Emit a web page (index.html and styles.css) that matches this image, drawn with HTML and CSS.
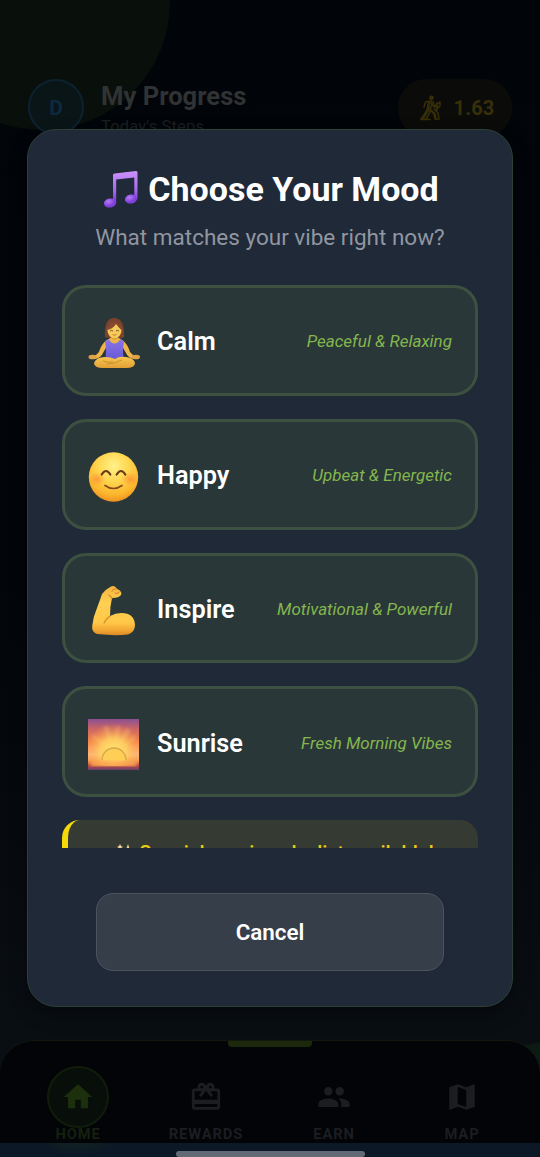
FILE: index.html
```html
<!DOCTYPE html>
<html lang="en">
<head>
<meta charset="utf-8">
<title>Choose Your Mood</title>
<link rel="stylesheet" href="styles.css">
</head>
<body>
<div class="screen">
  <div class="glow"></div>
  <div class="glow-low"></div>
  <header class="header">
    <div class="avatar">D</div>
    <div class="heading">
      <div class="heading-title">My Progress</div>
      <div class="heading-sub">Today's Steps</div>
    </div>
    <div class="balance">
      <svg class="walk" viewBox="0 0 24 26" fill="none" stroke="currentColor" stroke-width="1.500" stroke-linejoin="round" stroke-linecap="round"><circle cx="12.500" cy="2.800" r="1.600" fill="currentColor"/><path d="M5 12l1.500-5L11 6l3 1 2 4 5-4v4l-4 4M9.500 8L8 15l-3 5-3 4h5l3-5 1-3M13 9l-2 6 4 4 1 5h4l-1-6-4-4M18 8v7M2 24.500h9"/><path d="M10.500 7l-1 8-5 8M12 8l3 4h4M11 14l5 5 1 5"/></svg>
      <span>1.63</span>
    </div>
  </header>
  <div class="spacer"></div>
  <nav class="nav">
    <div class="nav-marker"></div>
    <div class="tab active"><div class="tab-icon"><svg viewBox="0 0 24 24"><path d="M10 20v-6h4v6h5v-8h3L12 3 2 12h3v8z"/></svg></div><span>HOME</span></div>
    <div class="tab"><div class="tab-icon"><svg viewBox="0 0 24 24"><path d="M20 6h-2.180c.11-.31.18-.65.18-1a3 3 0 0 0-5.500-1.650l-.5.670-.5-.680A3 3 0 0 0 6 5c0 .35.07.69.18 1H4c-1.110 0-1.990.89-1.990 2L2 19c0 1.110.89 2 2 2h16c1.110 0 2-.89 2-2V8c0-1.110-.89-2-2-2zm-5-2c.55 0 1 .45 1 1s-.45 1-1 1-1-.45-1-1 .45-1 1-1zM9 4c.55 0 1 .45 1 1s-.45 1-1 1-1-.45-1-1 .45-1 1-1zm11 15H4v-2h16v2zm0-5H4V8h5.080L7 10.830 8.620 12 11 8.760l1-1.360 1 1.360L15.380 12 17 10.830 14.920 8H20v6z"/></svg></div><span>REWARDS</span></div>
    <div class="tab"><div class="tab-icon"><svg viewBox="0 0 24 24"><path d="M16 11c1.660 0 2.990-1.340 2.990-3S17.660 5 16 5s-3 1.340-3 3 1.340 3 3 3zm-8 0c1.660 0 2.990-1.340 2.990-3S9.660 5 8 5 5 6.340 5 8s1.340 3 3 3zm0 2c-2.330 0-7 1.170-7 3.500V19h14v-2.500c0-2.330-4.670-3.500-7-3.500zm8 0c-.29 0-.62.02-.97.05 1.160.84 1.970 1.970 1.970 3.450V19h6v-2.500c0-2.330-4.670-3.500-7-3.500z"/></svg></div><span>EARN</span></div>
    <div class="tab"><div class="tab-icon"><svg viewBox="0 0 24 24"><path d="M20.500 3l-.16.03L15 5.100 9 3 3.360 4.900c-.21.07-.36.25-.36.48V20.500c0 .28.22.5.5.5l.16-.03L9 18.900l6 2.100 5.640-1.900c.21-.07.36-.25.36-.48V3.500c0-.28-.22-.5-.5-.5zM15 19l-6-2.110V5l6 2.110V19z"/></svg></div><span>MAP</span></div>
  </nav>
  <div class="system-bar"><div class="home-glow"></div><div class="handle"></div></div>

  <div class="modal">
    <h1 class="title">
      <svg class="note" viewBox="0 0 36 38"><defs><linearGradient id="nt" x1="0" y1="0" x2="0" y2="1"><stop offset="0" stop-color="#ce91fa"/><stop offset=".6" stop-color="#a269ee"/><stop offset="1" stop-color="#7a35d2"/></linearGradient><radialGradient id="nh" cx=".4" cy=".3"><stop offset="0" stop-color="#b47bf5"/><stop offset="1" stop-color="#8140dc"/></radialGradient></defs><path d="M10 5Q10 3.700 11.500 3.500L33 1Q34.500 .9 34.500 2.500V29H31.300V7.500L13.200 9.500V33H10z" fill="url(#nt)"/><ellipse cx="7" cy="33" rx="6.200" ry="4.500" transform="rotate(-12 7 33)" fill="url(#nh)"/><ellipse cx="28" cy="29" rx="6.200" ry="4.500" transform="rotate(-12 28 29)" fill="url(#nh)"/></svg>
      <span>Choose Your Mood</span>
    </h1>
    <p class="subtitle">What matches your vibe right now?</p>
    <div class="list">
      <div class="option">
        <svg class="emoji" viewBox="0 0 52 52"><defs><linearGradient id="sk" x1="0" y1="0" x2="0" y2="1"><stop offset="0" stop-color="#f8c750"/><stop offset="1" stop-color="#e2a035"/></linearGradient><linearGradient id="top" x1="0" y1="0" x2="0" y2="1"><stop offset="0" stop-color="#8a76e4"/><stop offset="1" stop-color="#6758d6"/></linearGradient></defs><path d="M17 20Q16 1 26 1Q37 1 36 20Q31 24 17 20z" fill="#7b432e"/><path d="M23.500 17h6v7h-6z" fill="#d99b36"/><path d="M18 23.500Q21 22 23 20.500Q26.500 25 30 20.500Q32 22 35 23.500Q40 28 42 35Q44 38 48 39L46 42Q40 41 38 36L34 29L35 42H18L19 29L15 36Q13 41 7 42L5 39Q9 38 11 35Q13 28 18 23.500z" fill="#efb548"/><ellipse cx="26.500" cy="13.500" rx="7" ry="7.800" fill="#f7cb57"/><path d="M19 13Q20 5 28 5q6 2 6.500 9Q31 11 28 7q-3 5-9 6z" fill="#87492f"/><path d="M22 14q1.500-1.300 3 0m3 0q1.500-1.300 3 0" stroke="#69422e" stroke-width=".9" fill="none"/><path d="M24.500 17.500q2 1.500 4 0" stroke="#c36d34" stroke-width=".9" fill="none"/><path d="M17 43Q19 35 17 24.500L20.500 22Q26.500 31 32.500 22L36 24.500Q34 35 36 43z" fill="url(#top)"/><path d="M6 46Q8 40 17 40Q23 40 27 42Q31 39 38 40Q46 41 47 46Q47 51 38 51H15Q6 51 6 46z" fill="url(#sk)"/><path d="M19 47Q26 47 34 43M15 44Q20 46 25 45" stroke="#cb9133" fill="none"/><ellipse cx="4.500" cy="40" rx="4" ry="2.300" fill="#dda346"/><ellipse cx="48" cy="40" rx="4" ry="2.300" fill="#dda346"/></svg>
        <span class="name">Calm</span><span class="desc">Peaceful &amp; Relaxing</span>
      </div>
      <div class="option">
        <svg class="emoji" viewBox="0 0 52 52"><defs><radialGradient id="face" cx=".5" cy=".28" r=".74"><stop offset="0" stop-color="#fff18b"/><stop offset=".4" stop-color="#ffd852"/><stop offset=".78" stop-color="#fbb62c"/><stop offset="1" stop-color="#ed8c22"/></radialGradient><radialGradient id="blush"><stop offset="0" stop-color="#ff702e" stop-opacity=".5"/><stop offset="1" stop-color="#ff702e" stop-opacity="0"/></radialGradient></defs><circle cx="25.500" cy="26" r="24.700" fill="url(#face)"/><ellipse cx="9" cy="28" rx="8.500" ry="7" fill="url(#blush)"/><ellipse cx="42" cy="28" rx="8.500" ry="7" fill="url(#blush)"/><path d="M13.700 23.500Q18 16.500 22.300 23.500M28.700 23.500Q33 16.500 37.300 23.500" fill="none" stroke="#6b3c1b" stroke-width="2.200" stroke-linecap="round"/><path d="M17 34.500Q25.500 40.500 34 34.500" fill="none" stroke="#8a491d" stroke-width="1.700" stroke-linecap="round"/></svg>
        <span class="name">Happy</span><span class="desc">Upbeat &amp; Energetic</span>
      </div>
      <div class="option">
        <svg class="emoji" viewBox="0 0 52 52"><defs><linearGradient id="arm" x1="0" y1="0" x2="0" y2="1"><stop offset="0" stop-color="#f5b63d"/><stop offset=".35" stop-color="#ffd052"/><stop offset=".75" stop-color="#ffc747"/><stop offset=".9" stop-color="#f2a632"/><stop offset="1" stop-color="#d98a27"/></linearGradient></defs><path d="M14 9Q18 4 23 1.500Q27 0 29 4Q33 5 33.500 9Q32 13 24 13Q22 21 22 31Q31 26 40 29Q47 32 47 40Q47 47 40 49.500Q27 51 9 49Q3.500 47 4.200 41Q5 32 9 23Q12 15 14 9z" fill="url(#arm)"/><path d="M22 31Q18 34 16 38M24 13L21 10M24 6q2-3 5-2M27 8q3 1 4-1" fill="none" stroke="#d3862a" stroke-width="1.200" stroke-linecap="round"/></svg>
        <span class="name">Inspire</span><span class="desc">Motivational &amp; Powerful</span>
      </div>
      <div class="option">
        <svg class="emoji" viewBox="0 0 52 52"><defs><linearGradient id="sky" x1="0" y1="0" x2="0" y2="1"><stop offset="0" stop-color="#8a5091"/><stop offset=".18" stop-color="#c86468"/><stop offset=".45" stop-color="#f4864a"/><stop offset=".7" stop-color="#ffbd83"/><stop offset=".82" stop-color="#f49a50"/><stop offset=".91" stop-color="#bd4c42"/><stop offset="1" stop-color="#67406f"/></linearGradient><radialGradient id="sun" cx=".5" cy=".68" r=".58"><stop offset="0" stop-color="#ffe66a"/><stop offset=".45" stop-color="#ffd360" stop-opacity=".85"/><stop offset="1" stop-color="#ff914d" stop-opacity="0"/></radialGradient><filter id="soft"><feGaussianBlur stdDeviation="1.800"/></filter></defs><path d="M0 0h51v51H0z" fill="url(#sky)"/><path d="M0 0h51v47H0z" fill="url(#sun)"/><path d="M24 29L15 7h5l5 22L29 7h3l-4 22L39 9l4 2-15 22L47 16v4L27 33 4 19v-4z" fill="#ffdb80" opacity=".25" filter="url(#soft)"/><path d="M14 41a12 12 0 0 1 24 0" fill="#ffce55" stroke="#d5a550" stroke-width="1.300"/><path d="M3 43q12-2 23-1t22 1v4H3z" fill="#ffa953" opacity=".8" filter="url(#soft)"/></svg>
        <span class="name">Sunrise</span><span class="desc">Fresh Morning Vibes</span>
      </div>
      <div class="special">
        <svg class="sparkle" viewBox="0 0 20 20"><path d="M12 1l2 6 5 3-5 2-2 6-2-6-5-2 5-3zM4 1l1 2 2 1-2 1-1 2-1-2-2-1 2-1z" fill="#f4d499"/></svg>
        <span>Special sunrise playlist available!</span>
      </div>
    </div>
    <button class="cancel">Cancel</button>
  </div>
</div>
</body>
</html>
```
FILE: styles.css
```css
* { box-sizing: border-box; }
body { margin: 0; background: #020509; font-family: Roboto, "Noto Sans", sans-serif; }
.screen { position: relative; width: 540px; height: 1157px; overflow: hidden; display: flex; flex-direction: column; background: linear-gradient(#010408 0%, #020509 50%, #080c11 80%, #0b1015 100%); }
.glow { position: absolute; left: -86px; top: -126px; width: 256px; height: 256px; border-radius: 50%; background: #090f0b; }
.glow-low { position: absolute; right: -60px; top: 1043px; width: 120px; height: 120px; border-radius: 50%; background: #0b1a12; }
.header { position: relative; display: flex; align-items: flex-start; padding: 79px 28px 0; height: 150px; }
.avatar { width: 56px; height: 56px; border: 2px solid #0c2232; border-radius: 50%; background: #0a1518; color: #0d2940; font-size: 21px; font-weight: 700; line-height: 54px; text-align: center; }
.heading { margin-left: 17px; flex: 1; }
.heading-title { font-size: 25.600px; font-weight: 700; line-height: 34px; color: #303234; }
.heading-sub { font-size: 16.500px; line-height: 20px; margin-top: 4px; color: #1b1e21; letter-spacing: .15px; }
.balance { width: 114px; height: 58px; display: flex; align-items: center; justify-content: center; gap: 10px; padding-left: 4px; border-radius: 28px; background: #0b0c09; color: #382f09; font-size: 20px; font-weight: 700; letter-spacing: .2px; }
.walk { width: 24px; height: 26px; }
.spacer { flex: 1; }
.nav { position: relative; height: 103px; display: flex; padding: 25px 14px 0; border-radius: 34px 34px 0 0; border-top: 1px solid #10190b; background: #020408; }
.nav-marker { position: absolute; left: 228px; top: 0; width: 84px; height: 6px; border-radius: 0 0 4px 4px; background: #1b280c; }
.tab { flex: 1; display: flex; flex-direction: column; align-items: center; color: #1c1d20; font-size: 14.700px; font-weight: 700; letter-spacing: .9px; }
.tab-icon { width: 62px; height: 62px; display: flex; align-items: center; justify-content: center; border-radius: 50%; }
.tab-icon svg { width: 34px; height: 34px; fill: currentColor; }
.tab span { line-height: 18px; margin-top: -3px; }
.active { color: #1a280e; }
.active .tab-icon { border: 2px solid #111d0b; background: #080f0a; color: #1d300d; }
.active span { color: #15200e; }
.system-bar { position: relative; height: 14px; display: flex; justify-content: center; align-items: flex-end; background: #0c1826; }
.home-glow { position: absolute; left: 38px; top: 0; width: 80px; height: 12px; background: radial-gradient(ellipse at top, #122222, transparent 70%); }
.handle { width: 189px; height: 6px; border-radius: 3px; background: #636a75; }
.modal { position: absolute; left: 27px; top: 129px; width: 486px; height: 878px; padding: 35px 34px; display: flex; flex-direction: column; align-items: center; border: 1px solid #2d4038; border-radius: 29px; background: #1f2937; box-shadow: 0 8px 18px rgba(0,0,0,.35); }
.title { display: flex; align-items: center; gap: 9px; height: 48px; margin: 0; padding-left: 2px; color: #fff; font-size: 34px; line-height: 48px; font-weight: 700; white-space: nowrap; }
.note { width: 36px; height: 38px; }
.subtitle { margin: 8px 0 32px; font-size: 22.500px; line-height: 32px; color: #9196a1; white-space: nowrap; }
.list { width: 416px; height: 563px; display: flex; flex-direction: column; gap: 23px; overflow: hidden; }
.option { height: 110.800px; flex: none; display: flex; align-items: center; padding: 0 23px; border: 3px solid #3c5140; border-radius: 24px; background: #2a3739; }
.emoji { width: 52px; height: 52px; margin-top: 6px; flex: none; }
.name { margin: 4px 0 0 17px; color: #fff; font-size: 25.300px; line-height: 32px; font-weight: 600; flex: 1; }
.desc { margin-top: 2px; color: #83b64d; font-size: 17px; line-height: 24px; font-style: italic; white-space: nowrap; }
.special { flex: none; height: 72px; display: flex; align-items: flex-start; justify-content: center; gap: 3px; padding: 21px 0 0 4px; border-left: 6px solid #f5d90a; border-radius: 18px; background: #353a33; color: #e9cc12; font-size: 20px; line-height: 24px; font-weight: 500; white-space: nowrap; }
.sparkle { width: 20px; height: 20px; margin-top: 2px; }
.cancel { width: 348px; height: 78px; padding-top: 1px; margin-top: 45px; flex: none; border: 1px solid #4b535f; border-radius: 17px; background: #363e4a; color: #fff; font-family: inherit; font-size: 22.400px; font-weight: 600; }
```
